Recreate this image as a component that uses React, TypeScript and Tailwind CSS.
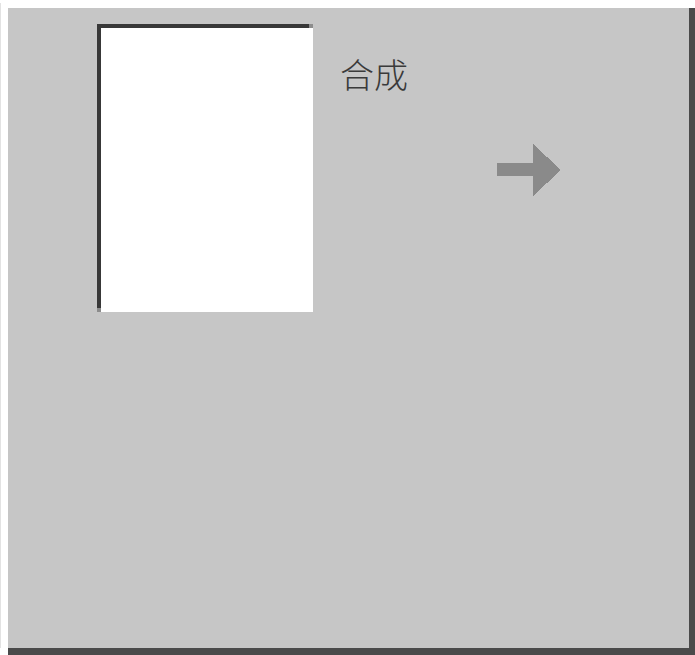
export default function App() {
  return (
    <div className="w-[695px] h-[655px] bg-white relative overflow-hidden">
      <div className="absolute left-0 top-[3px] w-px h-[645px] bg-[#e2e2e2]" />
      <div className="w-[695px] h-[655px] pt-[8px] pl-[8px] flex flex-col">
        <div className="flex flex-1">
          <div className="flex-1 bg-[#c6c6c6] pt-[16px] pl-[89px] flex items-start">
            <div className="w-[216px] h-[288px] bg-white border-t-4 border-l-4 border-[#383838] relative">
              <div className="absolute -top-[4px] right-0 w-[4px] h-[4px] bg-[#8c8c8c]" />
              <div className="absolute bottom-0 -left-[4px] w-[4px] h-[4px] bg-[#8c8c8c]" />
            </div>
            <div
              className="ml-[27px] mt-[33px] text-[34px] leading-none font-light text-[#3a3a3a]"
              style={{ fontFamily: '"Noto Sans CJK SC", "Noto Sans", sans-serif' }}
            >
              合成
            </div>
            <svg
              className="ml-[89px] mt-[120px]"
              width="64"
              height="52"
              viewBox="0 0 64 52"
              shapeRendering="crispEdges"
            >
              <rect x="0" y="19" width="37" height="13" fill="#8a8a8a" />
              <polygon points="36,0 64,26 36,52" fill="#8a8a8a" />
            </svg>
          </div>
          <div className="w-[6px] bg-[#4a4a4a]" />
        </div>
        <div className="h-[7px] bg-[#4a4a4a]" />
      </div>
    </div>
  );
}
